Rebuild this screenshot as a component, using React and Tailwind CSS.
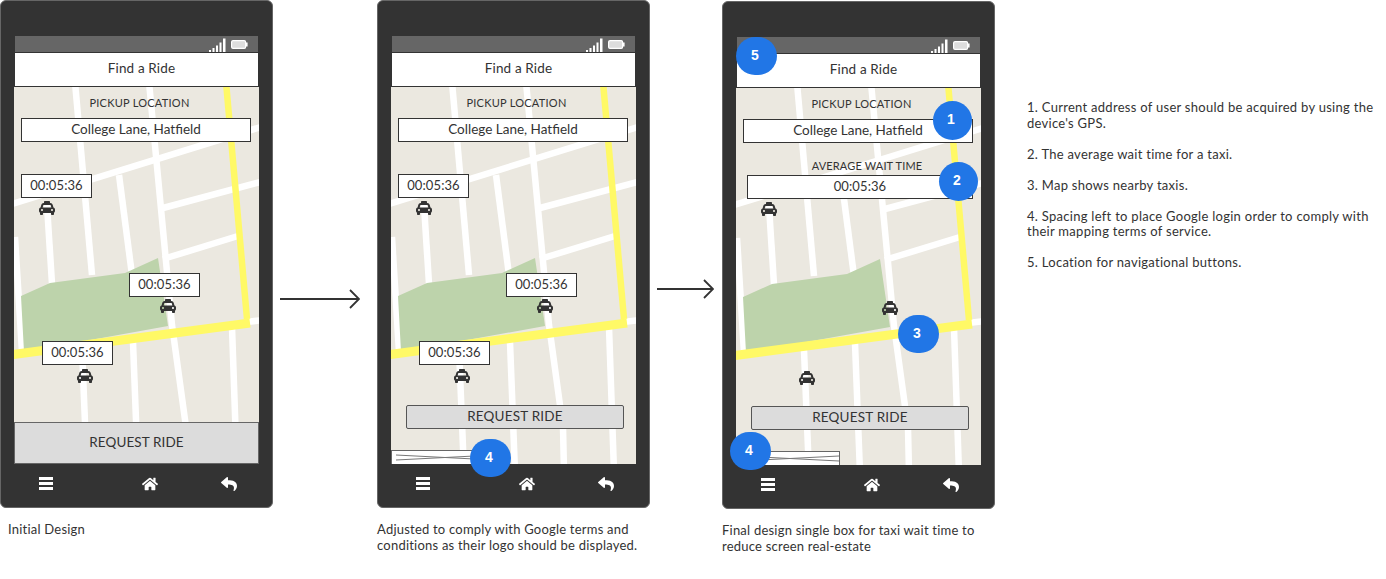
import React from "react";
import { FaTaxi, FaHome, FaReply } from "react-icons/fa";

function MapArt({ h }) {
  const roads = [
    "M61 -5 L78 188",
    "M135 -5 L158 238 L172 340 L173 385",
    "M105 88 L118 188",
    "M33 118 L38 197",
    "M1 150 L8 265",
    "M68 262 L73 385",
    "M119 255 L124 385",
    "M218 240 L223 385",
    "M-5 118 L250 39",
    "M149 121 L250 94",
    "M149 172 L224 149",
    "M232 235 L250 233",
  ];
  return (
    <svg className="absolute inset-0" width="245" height={h} viewBox={`0 0 245 ${h}`}>
      <rect width="245" height={h} fill="#ebe8e0" />
      <g fill="none" stroke="#ffffff" strokeWidth="6.5">
        {roads.map((d) => (
          <path key={d} d={d} />
        ))}
      </g>
      <polygon points="7,209 36,196 111,186 144,171 154,239 10,265" fill="#bdd3ab" />
      <path d="M212 -5 L233 232" fill="none" stroke="#fff966" strokeWidth="6.5" />
      <path d="M236 236 L-5 268" fill="none" stroke="#fff966" strokeWidth="9" />
    </svg>
  );
}

function Taxi({ className }) {
  return <FaTaxi className={`absolute text-[16px] text-[#333333] ${className}`} />;
}

function Time({ className }) {
  return (
    <div className={`absolute flex h-[24px] w-[71px] items-center justify-center border border-[#333333] bg-white pb-[1px] text-[13px] tracking-[0.1px] text-[#333333] ${className}`}>
      00:05:36
    </div>
  );
}

function Pickup() {
  return (
    <div className="relative flex flex-col items-start gap-[7px] pl-[7px] pt-[8px]">
      <div className="w-[230px] pl-[7px] text-center text-[11px] leading-[16px] tracking-[0.25px] text-[#333333]">PICKUP LOCATION</div>
      <div className="flex h-[24px] w-[230px] items-center justify-center border border-[#333333] bg-white pb-[2px] text-[13.5px] text-[#333333]">
        College Lane, Hatfield
      </div>
    </div>
  );
}

function Bottom() {
  return (
    <div className="relative mt-auto flex flex-col gap-[21px]">
      <div className="ml-[15px] flex h-[24px] w-[218px] items-center justify-center rounded-[2px] border border-[#555555] bg-[#dcdcdc] pb-[1px] text-[13.5px] tracking-[0.2px] text-[#333333]">
        REQUEST RIDE
      </div>
      <div className="h-[14px] w-[104px] border border-b-0 border-[#666666] bg-white">
        <svg className="block" width="102" height="13" viewBox="0 0 102 13">
          <path d="M4 4 L102 9 M4 9 L102 4" stroke="#777777" strokeWidth="1" fill="none" />
        </svg>
      </div>
    </div>
  );
}

function Dot({ n, className }) {
  return (
    <div className={`absolute z-10 flex items-center justify-center rounded-full bg-[#2176e6] pb-[2px] pr-[3px] font-['Liberation_Sans',sans-serif] text-[14px] font-bold text-white ${className}`}>
      {n}
    </div>
  );
}

function Phone({ mapH, children, over, tall }) {
  return (
    <div className="relative h-[508px] w-[273px] rounded-[6px] border border-[#666666] bg-[#333333] pt-[35px]">
      <div className="mx-[14px] flex h-[16px] items-center justify-end gap-[5px] bg-[#666666] pr-[10px]">
        <svg width="17" height="14" viewBox="0 0 17 14" className="self-end">
          <path d="M0 12h2v2H0zM3.5 10h2v4h-2zM7 7.5h2V14H7zM10.5 4.5h2V14h-2zM14 0.5h2.5V14H14z" fill="#ffffff" />
        </svg>
        <svg width="17" height="9" viewBox="0 0 17 9">
          <rect x="0.6" y="0.6" width="14" height="7.8" rx="1.5" fill="#dddddd" stroke="#ffffff" strokeWidth="1.2" />
          <rect x="15" y="2.5" width="1.6" height="4" fill="#ffffff" />
        </svg>
      </div>
      <div className="mx-[14px] flex h-[35px] items-center justify-center border-b border-t border-[#333333] bg-white pb-[3px] pl-[10px] text-[13.5px] tracking-[0.15px] text-[#333333]">
        Find a Ride
      </div>
      <div className="relative mx-[13px] flex w-[245px] flex-col" style={{ height: mapH }}>
        <MapArt h={mapH} />
        {children}
      </div>
      {tall && (
        <div className="mx-[13px] flex h-[42px] w-[245px] items-center justify-center border border-[#666666] bg-[#dcdcdc] pb-[1px] text-[13.5px] tracking-[0.1px] text-[#333333]">
          REQUEST RIDE
        </div>
      )}
      <div className="flex h-[43px] items-center pb-[4px] pl-[38px] text-white">
        <div className="flex w-[14px] flex-col gap-[2px]">
          <div className="h-[3px] bg-white" />
          <div className="h-[3px] bg-white" />
          <div className="h-[3px] bg-white" />
        </div>
        <FaHome className="ml-[89px] text-[16px]" />
        <FaReply className="ml-[63px] text-[16px]" />
      </div>
      {over}
    </div>
  );
}

const Caption = ({ children }) => <p className="mt-[13px] text-[13px] leading-[16px] tracking-[0.22px] text-[#333333]">{children}</p>;

function Pins() {
  return (
    <>
      <Time className="left-[7px] top-[87px]" />
      <Taxi className="left-[25px] top-[113px]" />
      <Time className="left-[115px] top-[186px]" />
      <Taxi className="left-[146px] top-[211px]" />
      <Time className="left-[28px] top-[254px]" />
      <Taxi className="left-[63px] top-[281px]" />
    </>
  );
}

export default function App() {
  return (
    <div className="flex h-[579px] w-[1386px] items-start overflow-hidden bg-white font-['Lato',sans-serif]">
      <div className="w-[273px]">
        <Phone mapH={335} tall>
          <Pickup />
          <Pins />
        </Phone>
        <Caption><span className="ml-[8px]">Initial Design</span></Caption>
      </div>

      <svg className="ml-[7px] mr-[17px] mt-[289px]" width="80" height="20" viewBox="0 0 80 20">
        <path d="M0 10 H79 M70 1 L79 10 L70 19" fill="none" stroke="#333333" strokeWidth="1.8" />
      </svg>

      <div className="w-[273px]">
        <Phone mapH={377} over={<Dot n="4" className="left-[92px] top-[438px] h-[38px] w-[41px]" />}>
          <Pickup />
          <Pins />
          <Bottom />
        </Phone>
        <Caption>Adjusted to comply with Google terms and conditions as their logo should be displayed.</Caption>
      </div>

      <svg className="ml-[7px] mr-[8px] mt-[279px]" width="57" height="20" viewBox="0 0 57 20">
        <path d="M0 10 H56 M47 1 L56 10 L47 19" fill="none" stroke="#333333" strokeWidth="1.8" />
      </svg>

      <div className="mt-[1px] w-[273px]">
        <Phone
          mapH={377}
          over={
            <>
              <Dot n="5" className="left-[13px] top-[35px] h-[38px] w-[41px]" />
              <Dot n="1" className="left-[210px] top-[99px] h-[39px] w-[39px]" />
              <Dot n="2" className="left-[216px] top-[160px] h-[39px] w-[39px]" />
              <Dot n="3" className="left-[175px] top-[313px] h-[38px] w-[41px]" />
              <Dot n="4" className="left-[7px] top-[430px] h-[38px] w-[41px]" />
            </>
          }
        >
          <Pickup />
          <div className="relative mt-[15px] flex flex-col items-end gap-[1px] pr-[8px]">
            <div className="w-[226px] pl-[14px] text-center text-[11px] leading-[16px] tracking-[0.15px] text-[#333333]">AVERAGE WAIT TIME</div>
            <div className="flex h-[24px] w-[226px] items-center justify-center border border-[#333333] bg-white pb-[1px] text-[13px] tracking-[0.1px] text-[#333333]">
              00:05:36
            </div>
          </div>
          <Taxi className="left-[25px] top-[113px]" />
          <Taxi className="left-[146px] top-[212px]" />
          <Taxi className="left-[63px] top-[282px]" />
          <Bottom />
        </Phone>
        <Caption>Final design single box for taxi wait time to reduce screen real-estate</Caption>
      </div>

      <div className="ml-[32px] mt-[100px] w-[350px] text-[13px] leading-[15.5px] tracking-[0.28px] text-[#333333]">
        <p>1. Current address of user should be acquired by using the device's GPS.</p>
        <p className="mt-[15.5px]">2. The average wait time for a taxi.</p>
        <p className="mt-[15.5px]">3. Map shows nearby taxis.</p>
        <p className="mt-[15.5px]">4. Spacing left to place Google login order to comply with their mapping terms of service.</p>
        <p className="mt-[15.5px]">5. Location for navigational buttons.</p>
      </div>
    </div>
  );
}
